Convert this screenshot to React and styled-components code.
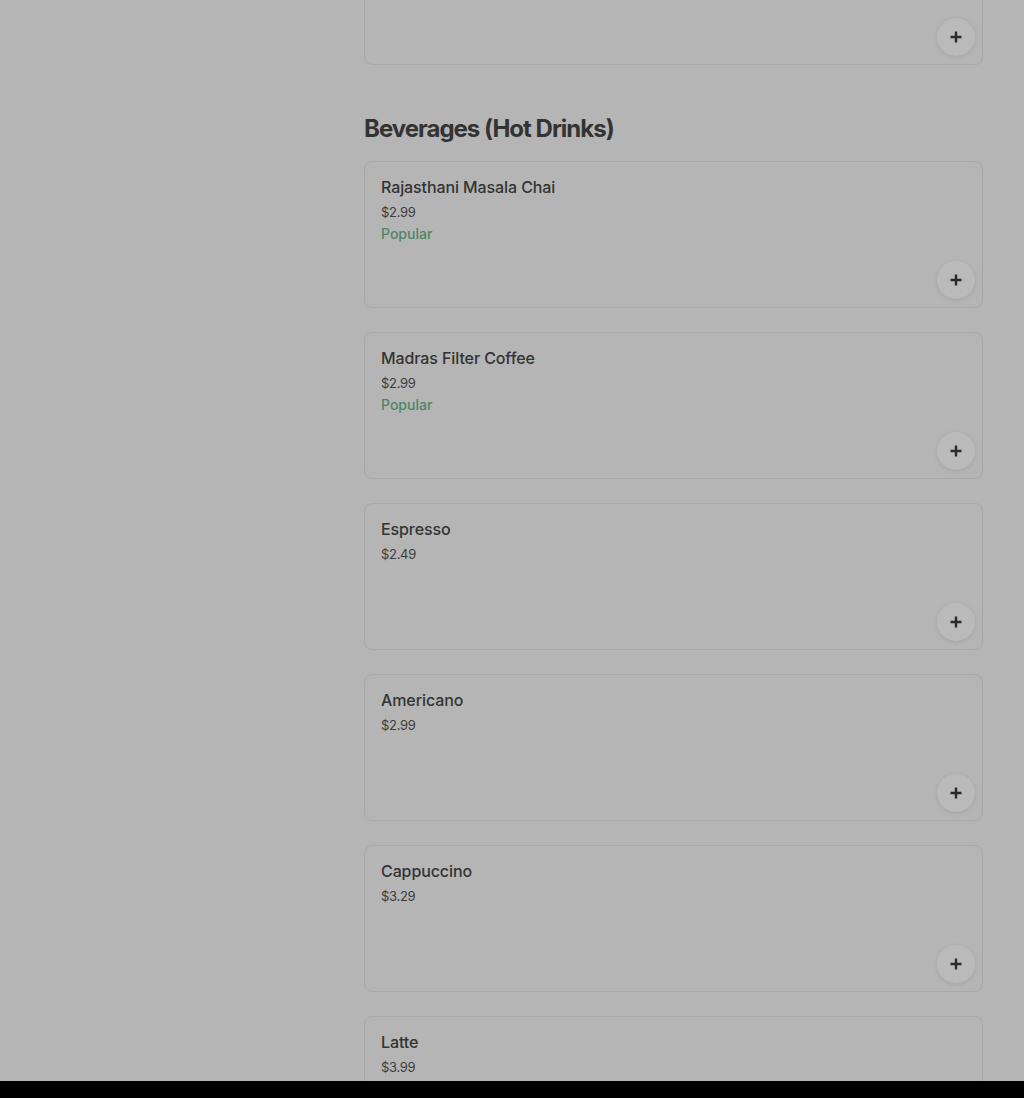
import React from "react";
import styled, { createGlobalStyle } from "styled-components";

const GlobalStyle = createGlobalStyle`
  html, body {
    margin: 0;
    padding: 0;
    background: #b5b5b5;
  }
  body {
    font-family: Inter, "Noto Sans", sans-serif;
    color: #2e2e2e;
  }
`;

const Page = styled.div`
  height: 1098px;
  display: flex;
  flex-direction: column;
  overflow: hidden;
`;

const Viewport = styled.div`
  flex: 1;
  overflow: hidden;
  display: grid;
  grid-template-columns: 364px 619px;
`;

const Main = styled.main`
  grid-column: 2;
  margin-top: -82px;
  display: flex;
  flex-direction: column;
`;

const Section = styled.section`
  display: flex;
  flex-direction: column;
  gap: 24px;
  margin-bottom: 50px;
`;

const Heading = styled.h2`
  margin: -1px 0 -7px;
  font-size: 24px;
  line-height: 30px;
  font-weight: 700;
  letter-spacing: -1px;
  color: #333;
`;

const Card = styled.div`
  position: relative;
  box-sizing: border-box;
  height: 147px;
  border: 1px solid #a9a9a9;
  border-radius: 8px;
  padding: 14px 16px;
  display: flex;
  flex-direction: column;
`;

const Name = styled.div`
  font-size: 16px;
  line-height: 22px;
  font-weight: 500;
  letter-spacing: -0.1px;
  color: #333;
`;

const Price = styled.div`
  margin-top: 5px;
  font-size: 13px;
  line-height: 19px;
  letter-spacing: -0.3px;
  color: #3d3d3d;
`;

const Tag = styled.div`
  margin-top: 3px;
  font-size: 14px;
  line-height: 18px;
  font-weight: 500;
  color: #4f8566;
`;

const AddButton = styled.button`
  position: absolute;
  right: 7px;
  bottom: 8px;
  width: 38px;
  height: 38px;
  border-radius: 50%;
  border: none;
  padding: 0;
  background: #bababa;
  box-shadow: 0 1px 4px rgba(0, 0, 0, 0.1);
  display: flex;
  align-items: center;
  justify-content: center;
  cursor: pointer;
`;

const BottomBar = styled.div`
  height: 17px;
  flex-shrink: 0;
  background: #000;
`;

const Plus = () => (
  <svg width="14" height="14" viewBox="0 0 14 14">
    <path d="M7 1.5v11M1.5 7h11" stroke="#2a2a2a" strokeWidth="2.4" />
  </svg>
);

const items = [
  { name: "Rajasthani Masala Chai", price: "$2.99", popular: true },
  { name: "Madras Filter Coffee", price: "$2.99", popular: true },
  { name: "Espresso", price: "$2.49" },
  { name: "Americano", price: "$2.99" },
  { name: "Cappuccino", price: "$3.29" },
  { name: "Latte", price: "$3.99" },
];

const ItemCard = ({ name, price, popular }) => (
  <Card>
    {name && <Name>{name}</Name>}
    {price && <Price>{price}</Price>}
    {popular && <Tag>Popular</Tag>}
    <AddButton aria-label="Add">
      <Plus />
    </AddButton>
  </Card>
);

export default function App() {
  return (
    <Page>
      <GlobalStyle />
      <Viewport>
        <Main>
          <Section>
            <ItemCard />
          </Section>
          <Section>
            <Heading>Beverages (Hot Drinks)</Heading>
            {items.map((it) => (
              <ItemCard key={it.name} {...it} />
            ))}
          </Section>
        </Main>
      </Viewport>
      <BottomBar />
    </Page>
  );
}
